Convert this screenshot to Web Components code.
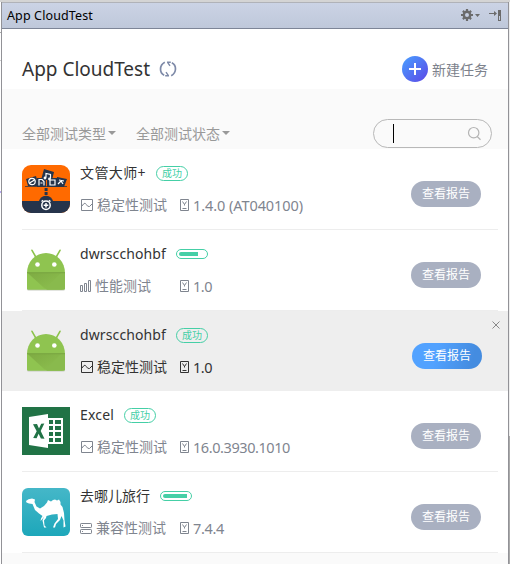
<!DOCTYPE html>
<html lang="zh-CN">
<head>
<meta charset="utf-8">
<title>App CloudTest</title>
<style>
html,body{margin:0;height:564px;overflow:hidden;background:#fff}
body{font-family:"Noto Sans","Noto Sans CJK SC",sans-serif;color:#333}
</style>
</head>
<body>
<cloud-window>
  <tool-bar slot="bar"></tool-bar>
  <page-header></page-header>
  <filter-bar></filter-bar>
  <task-row icon="files" name="文管大师+" name-width="66" state="done" kind="stable" kind-name="稳定性测试" version="1.4.0 (AT040100)" version-width="110"></task-row>
  <task-row icon="droid" name="dwrscchohbf" name-width="86" state="19" kind="perf" kind-name="性能测试" version="1.0" version-width="19"></task-row>
  <task-row active icon="droid" name="dwrscchohbf" name-width="86" state="done" kind="stable" kind-name="稳定性测试" version="1.0" version-width="19"></task-row>
  <task-row icon="excel" name="Excel" name-width="34" state="done" kind="stable" kind-name="稳定性测试" version="16.0.3930.1010" version-width="97"></task-row>
  <task-row icon="camel" name="去哪儿旅行" name-width="70" state="24" kind="compat" kind-name="兼容性测试" version="7.4.4" version-width="31"></task-row>
</cloud-window>
<script>
const make = (host, html) => { host.attachShadow({mode:'open'}).innerHTML = html; };

// Text whose letters are spaced to fill a given width
customElements.define('fit-text', class extends HTMLElement {
  connectedCallback() {
    make(this, `<style>:host{display:inline-block;white-space:pre}span{display:inline-block}</style><span><slot></slot></span>`);
    const w = +this.getAttribute('width'), s = this.shadowRoot.querySelector('span');
    const n = this.textContent.length;
    s.style.letterSpacing = ((w - s.getBoundingClientRect().width) / n).toFixed(3) + 'px';
    this.style.width = w + 'px';
  }
});

customElements.define('cloud-window', class extends HTMLElement {
  constructor() { super(); make(this, `<style>
  :host{display:grid;grid-template-columns:1px 1px 506px 1px 1px;grid-template-rows:2px 562px;width:510px;height:564px}
  .top{grid-column:1/-1;background:#d4d4d4}
  .l{background:linear-gradient(#aaa,#aaa) 0 30px/1px 1px no-repeat,linear-gradient(#ccc,#ccc) 0 58px/1px 1px no-repeat,linear-gradient(#b9a9f5,#b9a9f5) 0 189px/1px 2px no-repeat,#fff}
  .b{background:#929297}
  .r{background:linear-gradient(#eee 434px,#aaa 434px)}
  main{background:#fafafa;border-top:1px solid #b0b2b8;box-sizing:border-box}
  </style><div class="top"></div><div class="l"></div><div class="b"></div><main><slot name="bar"></slot><slot></slot></main><div class="b"></div><div class="r"></div>`); }
});

customElements.define('tool-bar', class extends HTMLElement {
  constructor() { super(); make(this, `<style>
  :host{display:flex;align-items:center;height:25px;padding:0 2px 0 5px;border-bottom:1px solid #7d8597;background:linear-gradient(#cbd3e5,#bfc8da);color:#000;font-size:12.5px;line-height:25px}
  fit-text{margin-right:auto}svg{display:block}
  </style><fit-text width="86">App CloudTest</fit-text>
  <svg width="47" height="25" viewBox="0 0 47 25" fill="#6b6b6b"><g transform="translate(8 12)"><circle r="3.2" fill="none" stroke="#6b6b6b" stroke-width="2.4"/><path d="M-1.1-6h2.2v2.4h-2.2zM-1.1 3.6h2.2V6h-2.2zM-6-1.1h2.4v2.2H-6zM3.6-1.1H6v2.2H3.6z"/><path transform="rotate(45)" d="M-1.1-5.8h2.2v2.2h-2.2zM-1.1 3.6h2.2v2.2h-2.2zM-5.8-1.1h2.2v2.2h-2.2zM3.6-1.1h2.2v2.2H3.6z"/></g><path d="M16 11h5l-2.5 3zM30 10h5V8l3 2.5-3 2.5v-2h-5z"/><path fill-rule="evenodd" d="M39 7h3v11h-3zM40 13v4h1v-4z"/></svg>`); }
});

customElements.define('page-header', class extends HTMLElement {
  constructor() { super(); make(this, `<style>
  :host{display:flex;align-items:center;height:40px;padding:20px 20px 0;background:#fff}
  .h{font-size:19px;line-height:40px;color:#333}
  .sync{margin:0 auto 0 9px}
  .add{width:26px;height:26px;border-radius:50%;background:linear-gradient(135deg,#4a9cff 5%,#5a50e8 90%);margin-right:4px}
  .new{font-size:14px;color:#7d828c}svg{display:block}
  </style><fit-text class="h" width="128">App CloudTest</fit-text>
  <svg class="sync" width="18" height="18" viewBox="0 0 18 18" fill="none" stroke="#7e8aa8" stroke-width="1.7"><path d="M5.800 2.200C.2 5.200.2 12.800 5.200 15.200M12.200 15.800C17.800 12.800 17.800 5.200 12.800 2.800"/><path d="M8 2.300h3.800M8.600 2.300l2.400 3.600M10 15.700H6.200M9.400 15.700L7 12.100" stroke-width="1.400"/></svg>
  <svg class="add" viewBox="0 0 26 26"><path d="M13 7v12M7 13h12" stroke="#fff" stroke-width="2"/></svg>
  <fit-text class="new" width="56">新建任务</fit-text>`); }
});

customElements.define('filter-bar', class extends HTMLElement {
  constructor() { super(); make(this, `<style>
  :host{display:flex;height:60px;box-sizing:border-box;padding:30px 16px 0 20px;font-size:14px;line-height:29px;color:#999}
  .f{display:flex;align-items:center;gap:2px;margin-right:20px;height:29px}
  .f:after{content:"";border:4px solid transparent;border-top-color:#999;border-bottom:0;margin-bottom:2px}
  .search{margin-left:auto;width:119px;height:29px;box-sizing:border-box;border:1px solid #b8b8b8;border-radius:15px;display:flex;align-items:center;padding:0 9px 0 19px;justify-content:space-between}
  i{width:1px;height:19px;background:#000}
  </style><div class="f"><fit-text width="84">全部测试类型</fit-text></div><div class="f"><fit-text width="84">全部测试状态</fit-text></div>
  <div class="search"><i></i><svg width="15" height="15" viewBox="0 0 15 15" fill="none" stroke="#b4b4b4" stroke-width="1.2"><circle cx="6.7" cy="6.7" r="5.2"/><path d="M10.2 10.5l3.3 3.2"/></svg></div>`); }
});

customElements.define('status-pill', class extends HTMLElement {
  connectedCallback() { const s = this.getAttribute('state'); make(this, `<style>
  :host{display:block;box-sizing:border-box;width:32px;border:1px solid #45cfa6;color:#45cfa6;border-radius:8px;font-size:10px;text-align:center}
  .t{height:13px;line-height:12px}
  .p{height:8px;padding:2px;box-sizing:border-box}.p i{display:block;height:4px;border-radius:2px 0 0 2px;background:#45cfa6;width:${s}px}
  </style>${s === 'done' ? '<div class="t">成功</div>' : '<div class="p"><i></i></div>'}`); }
});

const kinds = {
  stable: `<svg width="14" height="13" viewBox="0 0 14 13"><path d="M1.5.5h11v11h-11zM2 7l1.500-2Q5 3 6.300 5.500T9.500 7.500L12 5"/></svg>`,
  perf: `<svg width="12" height="13" viewBox="0 0 12 13"><path d="M.5 5.500h2v6h-2zM4.500 3.500h2v8h-2zM8.500.5h2v11h-2z"/></svg>`,
  compat: `<svg width="12" height="13" viewBox="0 0 12 13"><rect x=".5" y="1.500" width="11" height="4" rx=".7"/><rect x=".5" y="7.500" width="11" height="4" rx=".7"/><path d="M2 3.500h1M2 9.500h1"/></svg>`
};

const icons = {
  files: `<svg viewBox="0 0 48 48"><defs><clipPath id="c"><rect width="48" height="48" rx="9"/></clipPath></defs><g clip-path="url(#c)"><path fill="#ff6a00" d="M0 0h48v48H0z"/><path fill="#26344b" d="M0 36h48v12H0z"/><circle cx="24" cy="38" r="7.3" fill="#26344b"/><path fill="#26344b" d="M22.6 23h3v3h-3zM22.6 27h3v3h-3zM3 21h42v.8H3z"/>
  <g fill="#26344b"><path d="M22 4l10 3-3 12-10-4zM4 14l10-3 3 10H6zM15 13h9v9h-9zM25 13h10v9H25zM35 12l10 2-3 8h-8z"/></g>
  <g fill="none" stroke="#fff" stroke-width="1.2"><path d="M24 12.500V8.500l4.500 1v4"/><circle cx="23" cy="13" r=".8"/><circle cx="27.500" cy="14" r=".8"/><circle cx="10" cy="16.500" r="3.200"/><path d="M7.500 18l5-3M17 20.500v-6h3l2 2v4M18.500 18h2M28 15h5v5h-5zM36 19l3-3 2 3M37 15l5 1"/></g><path stroke="#ff6a00" d="M24.500 15v6"/>
  <g stroke="#fff" fill="none" stroke-width="1.5"><circle cx="24" cy="40.300" r="4.200"/><path d="M24 38v4.600M21.700 40.300h4.600M19.500 36.500l1.700-1.200M28.500 36.500l-1.700-1.200"/></g></g></svg>`,
  droid: `<svg viewBox="0 0 48 48"><defs><linearGradient id="g" x1="0" y1="0" x2="1" y2="1"><stop stop-color="#78a33d"/><stop offset="1" stop-color="#8fc350"/></linearGradient></defs><path d="M5 41v2q0 1.600 1.500 1.600h35q1.500 0 1.500-1.600V41" fill="#c5c9c0"/><path d="M10 4.300l4 7M38 4.300l-4 7" stroke="#8bc34a" stroke-width="1.600" stroke-linecap="round"/><path d="M5 27a19 20 0 0 1 38 0v15.200q0 1.500-1.500 1.500h-35Q5 43.700 5 42.200z" fill="#8fc450"/><path d="M5.400 27H43v15.700L40 43.700H25z" fill="#89ba4d"/><path d="M6 27h33L23 43z" fill="url(#g)" opacity=".65"/><path d="M5 26.700h38" stroke="#729c3d" stroke-width=".8"/><circle cx="15.500" cy="18.500" r="2.300" fill="#fff"/><circle cx="32.300" cy="18.500" r="2.300" fill="#fff"/></svg>`,
  excel: `<svg viewBox="0 0 48 48"><path fill="#217346" d="M0 0h48v48H0z"/><path fill="#fff" d="M7 10l19-3v34L7 38z"/><path fill="#fff" d="M26 11h15v26H26z"/><path fill="#217346" d="M27 13h4v4h-4zM33 13h6v4h-6zM27 19h4v4h-4zM33 19h6v4h-6zM27 25h4v4h-4zM33 25h6v4h-6zM27 31h4v4h-4zM33 31h6v4h-6zM11 17.300l4-.3 2 4.600 2.200-4.900 3.100-.2-3.600 7.500 3.800 7.800-3.600-.3-2.300-4.700-2 4.400-3.400-.3 3.500-6.700z"/></svg>`,
  camel: `<svg viewBox="0 0 48 48"><defs><linearGradient id="k" x2="0" y2="1"><stop stop-color="#45b7c8"/><stop offset="1" stop-color="#1da7ba"/></linearGradient></defs><rect width="48" height="48" rx="6" fill="url(#k)"/><path fill="#fff" d="M4 13Q6 10.500 10 10.500L13 11.500 12.500 14 14.500 18.500 18 20.500 22 18 25 14.500 26 12 29 13.500 31 12 33 11.500 35 12.500 37 11.500 38.500 14 38.500 16.500 40.500 19 42 25 42.500 32 43.500 38.500 41.500 39.500 41.500 32.500 39.500 28 38 32 34 36 33 39.500 31 39.500 32.500 35.500 36 31 35.500 26 30 26.500 24.500 28 24 30 22 32.500 22.500 37.500 24.500 39.500 22 39.500 20.500 32.500 22 28.500 20.500 31 18.500 33 19 30.500 20.500 28 17 25.500 13 22 10.500 16 7 15.500 4.500 14.500z"/></svg>`
};

customElements.define('task-row', class extends HTMLElement {
  connectedCallback() { const a = n => this.getAttribute(n); make(this, `<style>
  :host{display:flex;box-sizing:border-box;height:81px;padding:16px 27px 0 20px;background:linear-gradient(#ededed,#ededed) 20px 80px/476px 1px no-repeat #fff;position:relative;color:#7f858f}
  :host([active]){height:80px;background:#eee;padding-right:26px;color:#333}
  .icon{width:48px;height:48px;margin-right:10px}svg{display:block}
  .text{flex:1}
  .name{display:flex;align-items:center;gap:10px;height:16px;font-size:14px;line-height:16px;color:#333}
  .meta{display:flex;align-items:center;margin-top:15px;height:18px;font-size:14px;line-height:18px}
  .meta svg{fill:none;stroke:currentColor}
  .kind{display:flex;width:99px;gap:${a('kind') === 'compat' ? 4 : 3}px;align-items:center}
  .ver{display:flex;gap:3px;align-items:center;font-size:14.5px}
  .btn{width:70px;height:26px;border-radius:13px;margin-top:16px;background:#a9b0c1;color:#fff;font-size:12px;line-height:25px;text-align:center}
  :host([active]) .btn{background:linear-gradient(105deg,#52a2ff 35%,#448ce0 85%)}
  .x{position:absolute;right:8px;top:10px;display:none}:host([active]) .x{display:block}
  </style><div class="icon">${icons[a('icon')]}</div>
  <div class="text"><div class="name"><fit-text width="${a('name-width')}">${a('name')}</fit-text><status-pill state="${a('state')}"></status-pill></div>
  <div class="meta"><div class="kind">${kinds[a('kind')]}<fit-text width="${a('kind-name').length * 14}">${a('kind-name')}</fit-text></div>
  <div class="ver"><svg width="11" height="13" viewBox="0 0 11 13"><path d="M1.500.5h8v11h-8zM3.500 2.500l2 3 2-3M5.500 5v1.500M3.500 9.500h4"/></svg><fit-text width="${a('version-width')}">${a('version')}</fit-text></div></div></div>
  <div class="btn">查看报告</div><svg class="x" width="8" height="8" viewBox="0 0 8 8"><path d="M.5.5l7 7M7.500.5l-7 7" stroke="#888"/></svg>`); }
});
</script>
</body>
</html>
